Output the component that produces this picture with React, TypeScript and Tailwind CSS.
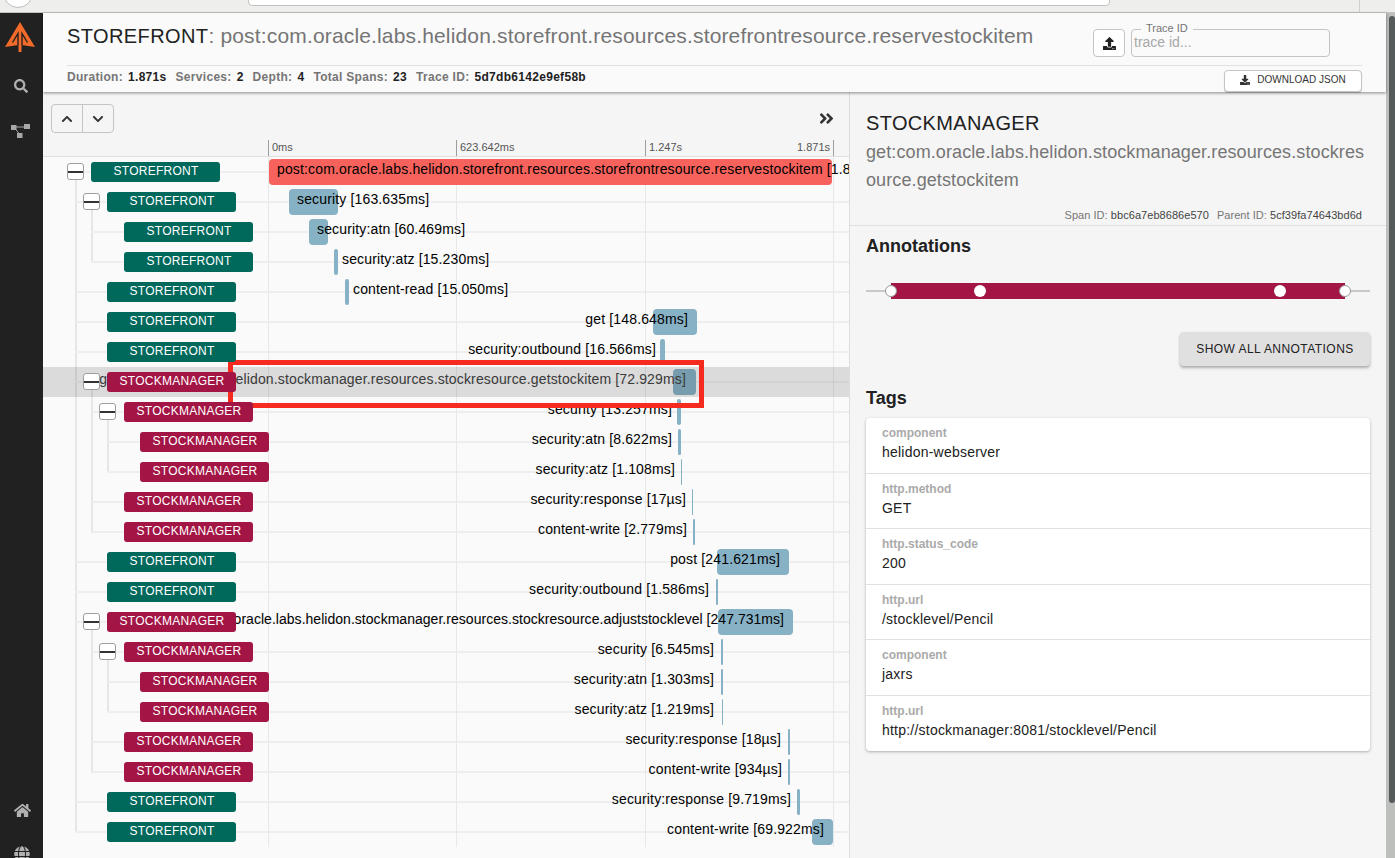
import { FaChevronUp, FaChevronDown, FaAngleDoubleRight, FaSearch, FaHome, FaGlobe, FaDownload, FaUpload } from "react-icons/fa";

type Span = {
  depth: number;
  service: "sf" | "sm";
  text: string;
  left: number;
  right: number;
  inside?: boolean;
  end?: number;
  toggle?: boolean;
  last?: number;
  tight?: boolean;
};

// x offsets inside the trace panel, per depth
const labelLeft = [48, 64, 81, 97];
const toggleLeft = [24, 40, 56];
const lineLeft = [32, 32, 48, 64];

const spans: Span[] = [
  { depth: 0, service: "sf", text: "post:com.oracle.labs.helidon.storefront.resources.storefrontresource.reservestockitem [1.871s]", left: 269, right: 832, inside: true, toggle: true, last: 22 },
  { depth: 1, service: "sf", text: "security [163.635ms]", left: 289, right: 338, inside: true, toggle: true, last: 3 },
  { depth: 2, service: "sf", text: "security:atn [60.469ms]", left: 309, right: 328, inside: true },
  { depth: 2, service: "sf", text: "security:atz [15.230ms]", left: 334, right: 338, inside: true },
  { depth: 1, service: "sf", text: "content-read [15.050ms]", left: 345, right: 349, inside: true },
  { depth: 1, service: "sf", text: "get [148.648ms]", left: 653, right: 697, end: 689 },
  { depth: 1, service: "sf", text: "security:outbound [16.566ms]", left: 660, right: 665, end: 657 },
  { depth: 1, service: "sm", text: "get:com.oracle.labs.helidon.stockmanager.resources.stockresource.getstockitem [72.929ms]", left: 673, right: 696, end: 687, toggle: true, last: 12 },
  { depth: 2, service: "sm", text: "security [13.257ms]", left: 677, right: 681, end: 673, toggle: true, last: 10 },
  { depth: 3, service: "sm", text: "security:atn [8.622ms]", left: 678, right: 681, end: 673 },
  { depth: 3, service: "sm", text: "security:atz [1.108ms]", left: 681, right: 682, end: 676 },
  { depth: 2, service: "sm", text: "security:response [17µs]", left: 692, right: 693, end: 687 },
  { depth: 2, service: "sm", text: "content-write [2.779ms]", left: 693, right: 695, end: 688 },
  { depth: 1, service: "sf", text: "post [241.621ms]", left: 717, right: 789, end: 781 },
  { depth: 1, service: "sf", text: "security:outbound [1.586ms]", left: 716, right: 718, end: 710 },
  { depth: 1, service: "sm", text: "post:com.oracle.labs.helidon.stockmanager.resources.stockresource.adjuststocklevel [247.731ms]", left: 718, right: 793, end: 785, toggle: true, last: 20, tight: true },
  { depth: 2, service: "sm", text: "security [6.545ms]", left: 721, right: 723, end: 715, toggle: true, last: 18 },
  { depth: 3, service: "sm", text: "security:atn [1.303ms]", left: 721, right: 723, end: 715 },
  { depth: 3, service: "sm", text: "security:atz [1.219ms]", left: 722, right: 723, end: 715 },
  { depth: 2, service: "sm", text: "security:response [18µs]", left: 788, right: 790, end: 782 },
  { depth: 2, service: "sm", text: "content-write [934µs]", left: 788, right: 790, end: 783 },
  { depth: 1, service: "sf", text: "security:response [9.719ms]", left: 797, right: 800, end: 792 },
  { depth: 1, service: "sf", text: "content-write [69.922ms]", left: 812, right: 833, end: 825 },
];

const tags = [
  ["component", "helidon-webserver"],
  ["http.method", "GET"],
  ["http.status_code", "200"],
  ["http.url", "/stocklevel/Pencil"],
  ["component", "jaxrs"],
  ["http.url", "http://stockmanager:8081/stocklevel/Pencil"],
];

const ticks = [225, 413, 602, 790];

function Stat({ name, value }: { name: string; value: string }) {
  return (
    <span className="mr-[9px]">
      <span className="font-bold tracking-[0.3px] text-[#757575]">{name}:</span>
      <span className="ml-[5px] font-bold tracking-[0.3px] text-[#222]">{value}</span>
    </span>
  );
}

function Row({ span, index }: { span: Span; index: number }) {
  const selected = index === 7;
  const x = labelLeft[span.depth];
  return (
    <div className="relative h-[30px]">
      {/* connector line, runs on to the right edge */}
      <div className="absolute right-0 top-[14px] h-[2px] bg-[#eeeeee]" style={{ left: lineLeft[span.depth] }} />
      {span.toggle && span.last !== undefined && (
        <div
          className="absolute top-[15px] w-[2px] bg-[#e6e6e6]"
          style={{ left: toggleLeft[span.depth] + 8, height: (span.last - index) * 30 }}
        />
      )}
      {ticks.map((t) => (
        <div key={t} className="absolute top-0 bottom-0 w-px bg-[#e8e8e8]" style={{ left: t }} />
      ))}
      {/* bar */}
      <div
        className={`absolute top-[2px] bottom-[2px] rounded-[4px] ${span.depth === 0 ? "bg-[#f7635c]" : "bg-[#87b2c6]"}`}
        style={{ left: span.left - 43, width: span.right - span.left }}
      />
      {/* bar text */}
      <div
        className={`absolute top-[2px] h-[20px] whitespace-nowrap text-[14px] leading-[20px] ${span.tight ? "tracking-[0.03px]" : "tracking-[0.15px]"} ${selected ? "text-[#444]" : "text-black"}`}
        style={span.inside ? { left: span.left - 43 + 8 } : { right: 807 - (span.end! - 43) }}
      >
        {span.text}
      </div>
      {selected && <div className="absolute inset-0 bg-black/[.12]" />}
      {/* service label */}
      <div className="relative z-10 flex h-full items-center" style={{ paddingLeft: x }}>
        {span.toggle && (
          <div className="absolute top-[6px] flex h-[17px] w-[17px] items-center rounded-[3px] border border-[#9e9e9e] bg-white" style={{ left: toggleLeft[span.depth] }}>
            <div className="h-[2px] w-full bg-[#333]" />
          </div>
        )}
        <div
          className={`flex h-[20px] w-[129px] items-center justify-center rounded-[3px] pb-[2px] pl-px text-[12px] tracking-[0.25px] text-white ${span.service === "sf" ? "bg-[#00695c]" : "bg-[#a31545]"}`}
        >
          {span.service === "sf" ? "STOREFRONT" : "STOCKMANAGER"}
        </div>
      </div>
    </div>
  );
}

export default function App() {
  return (
    <div className="flex h-[858px] w-[1395px] flex-col overflow-hidden bg-[#f5f5f5] font-['Liberation_Sans',Arial,sans-serif] text-[#212121]">
      {/* browser strip */}
      <div className="relative h-[13px] shrink-0 border-b border-[#c4c4c0] bg-[#eeeeec]">
        <div className="absolute left-[3px] top-[-22px] h-[30px] w-[30px] rounded-full border border-[#bdbdbd] bg-white" />
        <div className="absolute left-[248px] top-[-10px] h-[16px] w-[862px] rounded-[4px] border border-[#c4c4c0] bg-white" />
        <div className="absolute bottom-0 left-[1359px] top-0 w-px bg-[#d0d0cc]" />
      </div>

      <div className="flex min-h-0 flex-1">
        {/* sidebar */}
        <div className="relative flex w-[43px] shrink-0 flex-col items-center bg-[#212121] pr-[3px]">
          <svg className="mt-[8px]" width="32" height="32" viewBox="0 0 32 32">
            <path d="M16 1 L31 26 L17.5 24 V31 H14.5 V24 L1 26 Z" fill="#f26b2a" />
            <path d="M8.5 21.5 L14 12.5 V24 M23.5 21.5 L18 12.5 V24" fill="none" stroke="#212121" strokeWidth="1.4" />
          </svg>
          <FaSearch className="ml-[1px] mt-[26px] text-[#b0b0b0]" size={14} />
          <svg className="ml-[1px] mt-[31px]" width="19" height="14" viewBox="0 0 19 14" fill="#a8a8a8">
            <rect x="0" y="1" width="5.5" height="5" />
            <rect x="13" y="0" width="6" height="5" />
            <rect x="6" y="9" width="5.5" height="5" />
            <path d="M5 3 H13 M4.5 5 L8 9.5" stroke="#a8a8a8" strokeWidth="1" fill="none" />
          </svg>
          <FaHome className="absolute left-[14px] top-[789px] text-[#b0b0b0]" size={17} />
          <FaGlobe className="absolute left-[14px] top-[833px] text-[#b0b0b0]" size={16} />
        </div>

        <div className="flex min-w-0 flex-1 flex-col">
          {/* header */}
          <div className="relative z-30 h-[79px] shrink-0 bg-[#fafafa] px-[24px] shadow-[0_1px_3px_rgba(0,0,0,0.45)]">
            <div className="flex h-[53px] items-start justify-between border-b border-[#e0e0e0]">
              <div className="whitespace-nowrap pt-[8px] text-[21px] leading-[30px] tracking-[0.16px] text-[#757575]">
                <span className="text-[20px] tracking-[0.4px] text-[#212121]">STOREFRONT</span>: post:com.oracle.labs.helidon.storefront.resources.storefrontresource.reservestockitem
              </div>
              <div className="mr-[32px] mt-[16px] flex items-center gap-[6px]">
                <div className="flex h-[28px] w-[32px] items-center justify-center rounded-[4px] border border-[#c4c4c4] bg-white">
                  <FaUpload size={13} className="text-[#212121]" />
                </div>
                <div className="relative h-[28px] w-[199px] rounded-[4px] border border-[#c4c4c4] px-[2px] text-[14px] leading-[24px] text-[#a8a8a8]">
                  trace id...
                  <span className="absolute left-[9px] top-[-8px] bg-[#fafafa] px-[5px] text-[11px] leading-[13px] text-[#757575]">Trace ID</span>
                </div>
              </div>
            </div>
            <div className="flex items-start justify-between">
              <div className="pt-[4px] text-[12px] leading-[14px]">
                <Stat name="Duration" value="1.871s" />
                <Stat name="Services" value="2" />
                <Stat name="Depth" value="4" />
                <Stat name="Total Spans" value="23" />
                <Stat name="Trace ID" value="5d7db6142e9ef58b" />
              </div>
              <div className="mt-[4px] flex h-[22px] w-[138px] items-center justify-center gap-[7px] rounded-[4px] border border-[#c4c4c4] bg-white pb-[3px] text-[10px] text-[#333] shadow-[0_1px_1px_rgba(0,0,0,0.2)]">
                <FaDownload size={10} />
                DOWNLOAD JSON
              </div>
            </div>
          </div>

          <div className="flex min-h-0 flex-1">
            {/* trace timeline */}
            <div className="relative w-[807px] shrink-0 overflow-hidden border-r border-[#dedede] bg-[#fafafa]">
              <div className="h-[64px] bg-[#f5f5f5] pt-[12px]">
                <div className="ml-[8px] flex h-[29px] w-[63px] rounded-[4px] border border-[#c4c4c4]">
                  <div className="flex flex-1 items-center justify-center border-r border-[#c4c4c4]">
                    <FaChevronUp size={12} className="text-[#333]" />
                  </div>
                  <div className="flex flex-1 items-center justify-center">
                    <FaChevronDown size={12} className="text-[#333]" />
                  </div>
                </div>
              </div>
              <FaAngleDoubleRight className="absolute left-[775px] top-[18px] text-[#333]" size={17} />
              {ticks.map((t, i) => (
                <div key={t} className="absolute top-[48px] h-[16px] border-l border-[#9e9e9e]" style={{ left: t }}>
                  {i < 3 && <span className="ml-[3px] block text-[11px] leading-[15px] text-[#555]">{["0ms", "623.642ms", "1.247s"][i]}</span>}
                  {i === 3 && <span className="absolute right-[4px] top-0 text-[11px] leading-[15px] text-[#555]">1.871s</span>}
                </div>
              ))}
              <div className="h-px bg-[#e0e0e0]" />
              {spans.map((s, i) => (
                <Row key={i} span={s} index={i} />
              ))}
            </div>

            {/* span details */}
            <div className="relative min-w-0 flex-1 bg-[#f5f5f5]">
              <div className="border-b border-[#e0e0e0] px-[16px] pb-[3px] pt-[19px]">
                <div className="text-[20px] leading-[24px] tracking-[0.35px] text-[#212121]">STOCKMANAGER</div>
                <div className="mt-[3px] break-all text-[18px] leading-[28px] tracking-[0.1px] text-[#757575]">
                  get:com.oracle.labs.helidon.stockmanager.resources.stockresource.getstockitem
                </div>
                <div className="mt-[14px] pr-[8px] text-right text-[11px] leading-[14px] tracking-[0.05px] text-[#757575]">
                  Span ID: <span className="text-[#444]">bbc6a7eb8686e570</span>
                  <span className="ml-[8px]">Parent ID: </span>
                  <span className="text-[#444]">5cf39fa74643bd6d</span>
                </div>
              </div>
              <div className="px-[16px]">
                <div className="mt-[9px] text-[18px] font-bold leading-[22px]">Annotations</div>
                <div className="relative mt-[26px] h-[16px]">
                  <div className="absolute left-0 right-0 top-[7px] h-[2px] bg-[#c8c8c8]" />
                  <div className="absolute bottom-0 left-[25px] top-0 w-[454px] bg-[#a31545]" />
                  {[25, 114, 414, 479].map((d, i) => (
                    <div
                      key={d}
                      className={`absolute top-[2px] h-[12px] w-[12px] -translate-x-1/2 rounded-full bg-white ${i === 0 || i === 3 ? "border border-[#999]" : ""}`}
                      style={{ left: d }}
                    />
                  ))}
                </div>
                <div className="mt-[33px] flex justify-end">
                  <div className="flex h-[34px] w-[190px] items-center justify-center rounded-[4px] bg-[#e0e0e0] text-[12px] tracking-[0.45px] text-[#212121] shadow-[0_2px_3px_rgba(0,0,0,0.3)]">
                    SHOW ALL ANNOTATIONS
                  </div>
                </div>
                <div className="mt-[21px] text-[18px] font-bold leading-[22px]">Tags</div>
                <div className="mt-[9px] overflow-hidden rounded-[4px] bg-white shadow-[0_1px_3px_rgba(0,0,0,0.3)]">
                  {tags.map(([k, v], i) => (
                    <div key={i} className="h-[55.5px] border-b border-[#e0e0e0] px-[16px] pt-[7px] last:border-b-0">
                      <div className="text-[12px] font-bold leading-[16px] text-[#aaaaaa]">{k}</div>
                      <div className="mt-[2px] text-[14px] leading-[18px] tracking-[0.22px] text-[#212121]">{v}</div>
                    </div>
                  ))}
                </div>
              </div>
            </div>
          </div>
        </div>

        {/* page scrollbar */}
        <div className="w-[9px] shrink-0 bg-[#bcbfbb] pl-[3px] pt-[3px]">
          <div className="h-[787px] rounded-[3px] bg-[#555a5a]" />
        </div>
      </div>

      {/* annotation drawn over the screenshot */}
      <div className="absolute left-[228px] top-[360px] h-[48px] w-[476px] border-[5px] border-[#f62a1f]" />
    </div>
  );
}
